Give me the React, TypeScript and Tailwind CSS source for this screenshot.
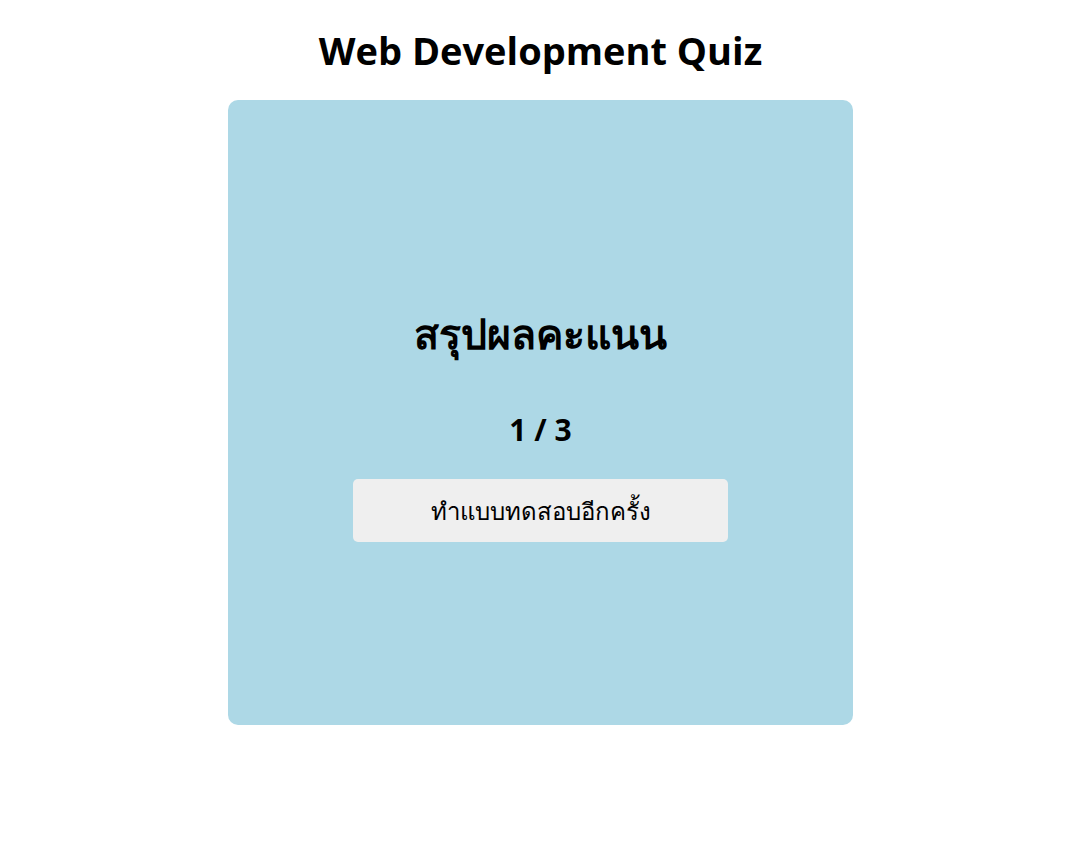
export default function App() {
  return (
    <div
      className="flex min-h-[846px] w-[1081px] flex-col items-center bg-white text-black"
      style={{ fontFamily: '"Open Sans", "Noto Sans", sans-serif' }}
    >
      <h1 className="mt-[26px] mb-[26px] text-[38px] leading-[48px] font-bold">
        Web Development Quiz
      </h1>
      <div className="flex h-[625px] w-[625px] flex-col items-center rounded-[10px] bg-[#add8e6] pt-[207px]">
        <h2 className="text-[41px] leading-[52px] font-bold">สรุปผลคะแนน</h2>
        <p className="mt-[51px] text-[30px] leading-[40px] font-bold">1 / 3</p>
        <button className="mt-[29px] h-[63px] w-[375px] rounded-[5px] bg-[#efefef] text-[24px]">
          ทำแบบทดสอบอีกครั้ง
        </button>
      </div>
    </div>
  );
}
